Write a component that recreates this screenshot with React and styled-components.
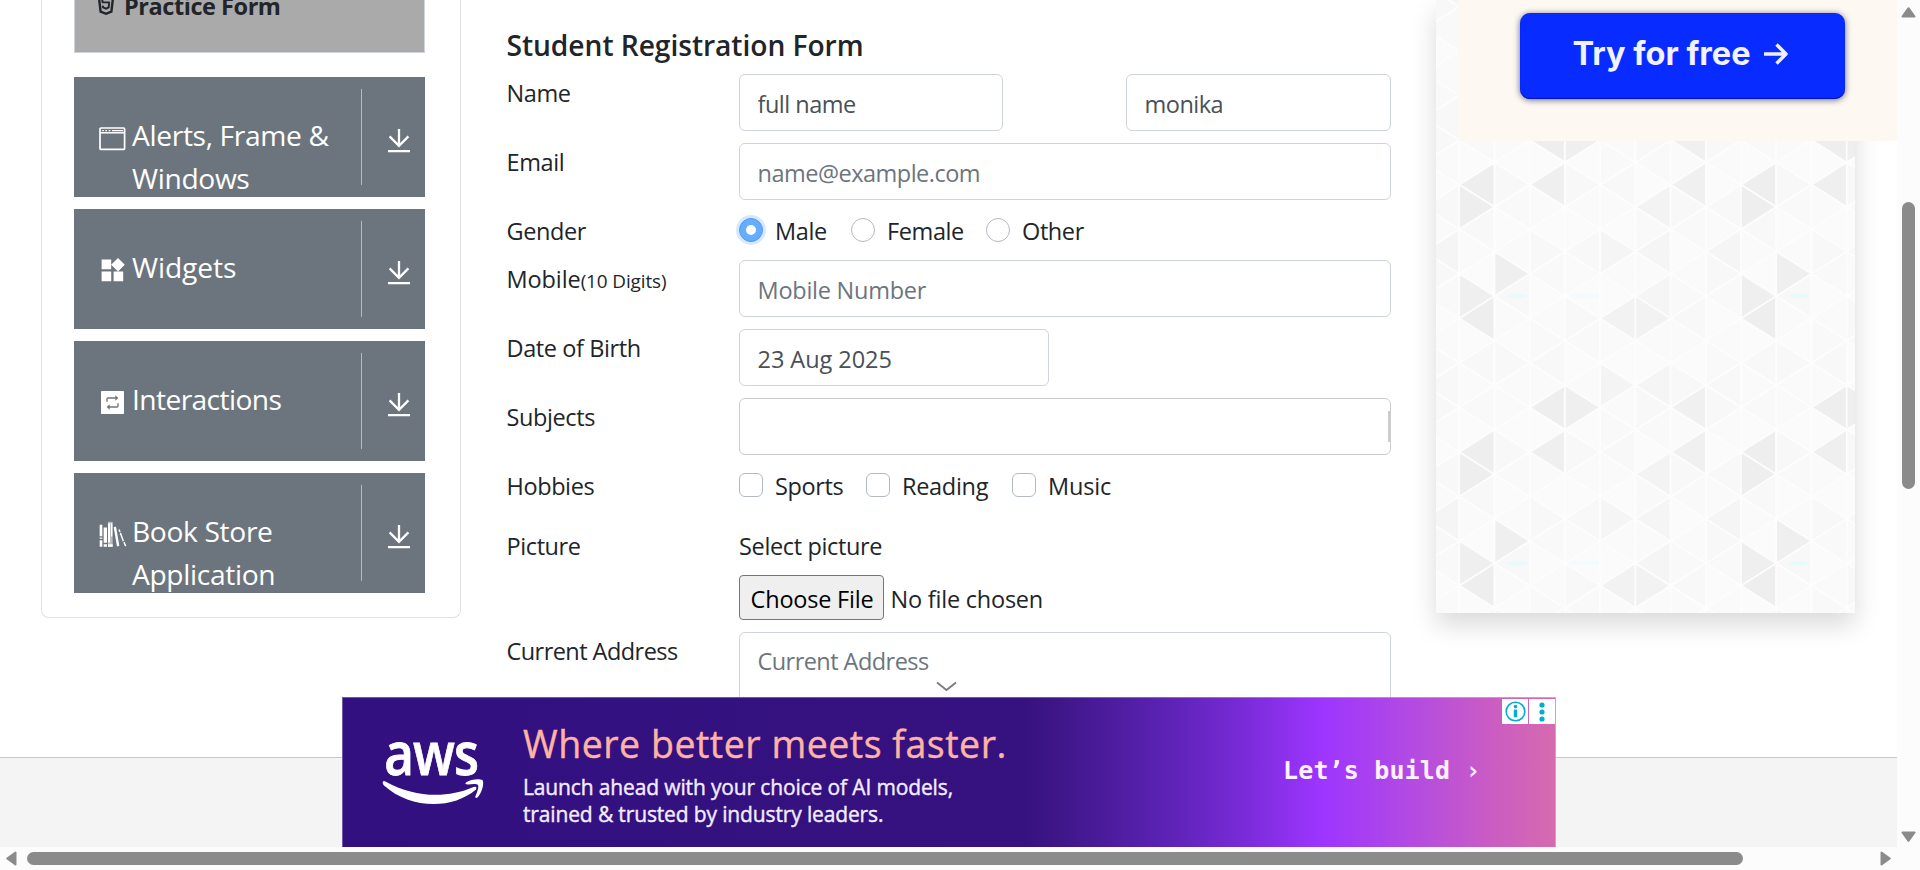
import React from 'react';
import styled, { createGlobalStyle, css } from 'styled-components';
import { MdWidgets } from 'react-icons/md';

const GlobalStyle = createGlobalStyle`
  *, *::before, *::after { box-sizing: border-box; }
  html, body { margin: 0; height: 870px; overflow: hidden; background: #fff; }
  body {
    font-family: "Open Sans", "Noto Sans", sans-serif;
    font-size: 23.5px;
    line-height: 36px;
    letter-spacing: -0.35px;
    color: #212529;
  }
`;

/* ---------- window frame ---------- */

const Window = styled.div`
  display: grid;
  grid-template: 847px 23px / 1897px 23px;
  width: 1920px;
  height: 870px;
  background: #fcfcfc;
`;

const Viewport = styled.div`
  position: relative;
  display: flex;
  flex-direction: column;
  overflow: hidden;
  background: #fff;
`;

const Scrollbar = styled.div`
  display: flex;
  flex-direction: ${(p) => (p.$vertical ? 'column' : 'row')};
  align-items: center;
  padding: ${(p) => (p.$vertical ? '7px 1px 5px 0' : '0 6px 1px 6px')};
`;

const Arrow = styled.svg`
  flex: none;
  fill: #8b8b8b;
  stroke: #8b8b8b;
  stroke-width: 2;
  stroke-linejoin: round;
`;

const Thumb = styled.div`
  flex: none;
  background: #8b8b8b;
  border-radius: 7px;
  ${(p) =>
    p.$vertical
      ? css`width: 13px; height: 287px; margin: 184px 0 auto;`
      : css`height: 13px; width: 1716px; margin: 0 auto 0 10px;`}
`;

/* ---------- main area ---------- */

const Main = styled.main`
  flex: none;
  display: flex;
  align-items: flex-start;
  height: 757px;
  overflow: hidden;
`;

const Footer = styled.footer`
  flex: 1;
  border-top: 1px solid #c8c8c8;
  background: #f4f4f4;
`;

const Sidebar = styled.nav`
  flex: none;
  display: flex;
  flex-direction: column;
  gap: 12px;
  width: 420px;
  height: 618px;
  margin-left: 41px;
  padding: 0 35px 24px 32px;
  border: 1px solid #dee0e2;
  border-top: 0;
  border-radius: 0 0 8px 8px;
`;

const ActiveEntry = styled.div`
  display: flex;
  height: 53px;
  margin-bottom: 12px;
  padding-left: 22px;
  background: #aaa;
  border: 1px solid #ced4da;
  border-top: 0;
  font-weight: 700;
  letter-spacing: -0.45px;
`;

const ActiveLabel = styled.span`
  margin: -12px 0 0 9px;
`;

const Group = styled.div`
  display: flex;
  flex: none;
  height: 120px;
  overflow: hidden;
  background: #6c757d;
  color: #fff;
`;

const GroupIcon = styled.div`
  display: flex;
  align-items: center;
  justify-content: center;
  flex: none;
  width: 29px;
  height: 29px;
  margin: 47px 5px 0 24px;
`;

const GroupTitle = styled.div`
  width: 229px;
  padding-top: 37px;
  font-size: 28.2px;
  line-height: 43.2px;
  letter-spacing: ${(p) => p.$track ?? -0.35}px;
`;

const GroupToggle = styled.div`
  display: flex;
  justify-content: center;
  align-items: center;
  width: 64px;
  height: 96px;
  margin-top: 12px;
  padding: 7px 0 0 11px;
  border-left: 1px solid #b5babe;
`;

const WindowIcon = () => (
  <svg width="27" height="24" viewBox="0 0 27 24" fill="none" stroke="#fff">
    <rect x="1" y="1" width="24.6" height="21.4" rx="1" strokeWidth="1.7" />
    <path d="M1 5.8h24.6" strokeWidth="1.5" />
    <path d="M3.2 3.6h1.6M6.4 3.6h1.6M9.6 3.6h1.8M13 3.6h11" strokeWidth="1.3" />
  </svg>
);

const RepeatIcon = () => (
  <svg width="23" height="23" viewBox="0 0 69 69">
    <rect width="69" height="69" rx="2" fill="#fff" />
    <g fill="none" stroke="#6c757d" strokeWidth="4">
      <path d="M18 32v-8q0-3 3-3h24M51 37v8q0 3-3 3H24" />
    </g>
    <path d="M43 13l9 8-9 8zM26 40l-9 8 9 8z" fill="#6c757d" />
  </svg>
);

const BooksIcon = () => (
  <svg width="28" height="27" viewBox="0 0 84 80" fill="#fff">
    <path d="M2 11h8v34H2zM2 49h8v4H2zM2 57h8v20H2z" />
    <path d="M14 19h10v46H14zM14 69h10v8H14z" />
    <path d="M27 2h14v75H27z" fill="#b9bec3" />
    <path d="M27 6h6v58h-6zM36 6h4v40h-4zM27 69h14v8H27z" />
    <path d="M44 18l7-2 10 58-7 2z" />
    <path d="M58 26l4-2 3 7-4 2zM62 36l4-2 9 25-4 2zM73 64l4-2 5 12-4 2z" />
  </svg>
);

const DownloadIcon = () => (
  <svg width="24" height="26" viewBox="0 0 24 26" fill="none" stroke="#fff" strokeWidth="2.3">
    <path d="M12 1v17M2.6 8.4L12 17.8l9.4-9.4M1 23.2h22" />
  </svg>
);

const Html5Icon = () => (
  <svg width="18" height="16" viewBox="0 0 18 16" fill="none" stroke="#212529">
    <path d="M1.7-5l1.9 16.6L9 13.8l5.4-2.2L16.3-5" strokeWidth="2.4" />
    <path d="M5 2.4h7.8M5.4-1v3.4M12.2 2.4l-.5 5L9 8.6 6 7.4l-.2-1.8" strokeWidth="1.9" />
  </svg>
);

/* ---------- form ---------- */

const Form = styled.form`
  flex: none;
  display: flex;
  flex-direction: column;
  width: 885px;
  margin: 28px 44.5px 0 45.5px;
`;

const Title = styled.h5`
  margin: 0 0 12px;
  font-size: 28.2px;
  line-height: 34px;
  font-weight: 600;
  letter-spacing: -0.06px;
`;

const Row = styled.div`
  display: grid;
  grid-template-columns: 232.5px 652px;
  align-items: start;
  margin-bottom: ${(p) => p.$gap ?? 12}px;
`;

const Label = styled.label`
  padding-top: 1px;
  height: 36px;
  letter-spacing: ${(p) => p.$track ?? -0.4}px;
  white-space: nowrap;

  small { font-size: 18.9px; letter-spacing: -0.1px; }
`;

const control = css`
  border: 1px solid #ced4da;
  border-radius: 6px;
  background: #fff;
  color: #495057;
  font-family: inherit;
  font-size: 23.5px;
  letter-spacing: ${(p) => p.$track ?? -0.5}px;
  outline: 0;
  &::placeholder { color: #6c757d; opacity: 1; }
`;

const Input = styled.input`
  ${control}
  width: ${(p) => p.$width || 652}px;
  height: 57px;
  padding: 3px 17.5px 0;
`;

const NamePair = styled.div`
  display: flex;
  justify-content: space-between;
`;

const TextArea = styled.textarea`
  ${control}
  width: 652px;
  height: 120px;
  padding: 10px 17.5px;
  line-height: 36px;
  resize: none;
`;

const TagBox = styled.div`
  display: flex;
  align-items: center;
  justify-content: flex-end;
  width: 652px;
  height: 57px;
  border: 1px solid #ccc;
  border-radius: 6px;
  padding-bottom: 1px;
`;

const TagBoxSeparator = styled.span`
  width: 2px;
  height: 31px;
  background: #ccc;
`;

const Options = styled.div`
  display: flex;
`;

const Option = styled.label`
  display: flex;
  width: ${(p) => p.$width}px;
  padding-top: 1px;
  gap: 12px;
  height: 36px;
  letter-spacing: ${(p) => p.$track ?? -0.4}px;
`;

const Mark = styled.span`
  flex: none;
  display: flex;
  align-items: center;
  justify-content: center;
  width: 24px;
  height: 24px;
  margin-top: 5px;
  border: 1px solid #b2bac2;
  border-radius: ${(p) => (p.$round ? '50%' : '6px')};
  ${(p) =>
    p.$checked &&
    css`
      background: #66adff;
      border-color: #4f9bf0;
      box-shadow: 0 0 0 3px #d8e9fd;
      &::after {
        content: '';
        width: 10px;
        height: 10px;
        border-radius: 50%;
        background: #fff;
      }
    `}
`;

const PictureField = styled.div`
  display: flex;
  flex-direction: column;
  gap: 12px;
`;

const FileRow = styled.div`
  display: flex;
  align-items: center;
  height: 45px;
  letter-spacing: -0.22px;
`;

const FileButton = styled.span`
  width: 145px;
  height: 45px;
  margin-right: 6.5px;
  padding: 5px 0 0 1px;
  border: 1px solid #767676;
  border-radius: 4px;
  background: #efefef;
  color: #000;
  text-align: center;
  white-space: nowrap;
`;

const FileStatus = styled.span`
  padding-top: 3px;
`;

/* ---------- right-hand promotion ---------- */

const PromoColumn = styled.aside`
  position: relative;
  flex: none;
  width: 419px;
  height: 613px;
  background: #fafafa;
  box-shadow: 0 12px 24px rgba(0, 0, 0, 0.15);
`;

const Pattern = styled.svg`
  position: absolute;
  inset: 0;
`;

const PromoCard = styled.div`
  position: relative;
  width: 439px;
  height: 141px;
  margin-left: 22px;
  padding: 13px 0 0 61.5px;
  background: #fdf8f1;
`;

const PromoButton = styled.div`
  display: flex;
  align-items: center;
  justify-content: center;
  gap: 12px;
  width: 325px;
  height: 86px;
  padding: 0 3px 4px 0;
  border-radius: 10px;
  background: #082cff;
  box-shadow: 0 1px 6px rgba(40, 40, 80, 0.7), inset 0 -1px 1px #0610c8;
  color: #f0f2ff;
  font: 700 32.5px/40px Inter, sans-serif;
  letter-spacing: 0;
`;

const COL = 35.22;
const HALF = 22.275;
const SHADES = {
  '0L2': '#eeeeee', '0R3': '#eeeeee', '2L2': '#efefef', '2L0': '#eeeeee', '3R0': '#efefef',
  '6L0': '#f0f0f0', '6L2': '#f0f0f0', '5L3': '#f3f3f3', '1R6': '#efefef', '0R7': '#efefef',
  '0L8': '#eeeeee', '4L8': '#f2f2f2', '5R8': '#f2f2f2', '5L7': '#f5f5f5', '5L5': '#f5f5f5',
  '7L5': '#f5f5f5', '4R5': '#f5f5f5', '4R11': '#f4f4f4', '5L11': '#f5f5f5',
};
const SOFT = ['#f8f8f8', '#fafafa', '#f9f9f9', '#fbfbfb', '#f8f8f8', '#fafafa', '#fbfbfb'];

const triangles = [];
for (let c = -1; c < 12; c++) {
  for (let h = -8; h < 24; h++) {
    const cm = (c + 8) % 8;
    const hm = (h + 12) % 12;
    const even = (c + h + 12) % 2 === 0;
    const x0 = 1459.3 + c * COL;
    const x1 = x0 + COL;
    const y = 140.2 + h * HALF;
    const key = `${cm}${even ? 'L' : 'R'}${hm}`;
    const fill = SHADES[key] || SOFT[(cm * 5 + hm * 3 + (even ? 2 : 0)) % 7];
    const pts = even
      ? `${x0},${y} ${x1},${y - HALF} ${x1},${y + HALF}`
      : `${x1},${y} ${x0},${y - HALF} ${x0},${y + HALF}`;
    triangles.push({ id: `${c}_${h}`, pts, fill });
  }
}

const tints = [
  [1517, 296, 11], [1584, 296, 16], [1799, 296, 11],
  [1517, 563.5, 11], [1584, 563, 16], [1799, 563.5, 11],
];

const TrianglePattern = () => (
  <Pattern width="419" height="613" viewBox="1436 0 419 613">
    {triangles.map((t) => (
      <polygon key={t.id} points={t.pts} fill={t.fill} stroke="#fdfdfd" strokeWidth="1.6" />
    ))}
    {tints.map(([x, y, r]) => (
      <ellipse key={`${x}_${y}`} cx={x} cy={y} rx={r} ry="2.2" fill={r > 12 ? '#f2fcfc' : '#e8fbfc'} />
    ))}
  </Pattern>
);

/* ---------- anchored banner ---------- */

const Banner = styled.div`
  position: absolute;
  left: 342px;
  bottom: 0;
  display: flex;
  width: 1214px;
  height: 150px;
  border: 1px solid rgba(255, 255, 255, 0.3);
  border-bottom: 0;
  background: linear-gradient(90deg, #32107f 0, #35127f 680px, #3c1584 705px, #5b22b4 822px,
    #7a2bd8 903px, #9d35ff 979px, #b34be2 1071px, #cb5cc3 1150px, #d66bae 1214px) border-box;
  color: #fff;
`;

const CollapseArrow = styled.svg`
  position: absolute;
  left: 936px;
  top: 681px;
  fill: none;
  stroke: #7c7c7c;
  stroke-width: 1.8;
`;

const Logo = styled.div`
  width: 180px;
  padding: 24px 0 0 39px;
`;

const LogoWord = styled.div`
  padding-left: 2px;
  width: 120px;
  height: 60px;
  font: 600 59px/60px "Open Sans", sans-serif;
  letter-spacing: -1px;
  transform: scaleX(0.87);
  transform-origin: 3px 0;
  -webkit-text-stroke: 0.8px #fff;
`;

const Smile = styled.svg`
  display: block;
  margin-top: -5px;
`;

const Copy = styled.div`
  width: 760px;
  padding-top: 20px;
`;

const Headline = styled.div`
  font-size: 37.5px;
  line-height: 52px;
  letter-spacing: 0.52px;
  color: #ffb3a4;
  -webkit-text-stroke: 0.4px #ffb3a4;
`;

const Blurb = styled.div`
  padding-top: 4px;
  font-size: 21px;
  line-height: 26.5px;
  font-weight: 500;
  letter-spacing: -0.14px;
  color: #f3ecff;
  -webkit-text-stroke: 0.4px #f3ecff;
`;

const Cta = styled.div`
  padding-top: 58px;
  font: 700 25px/30px "DejaVu Sans Mono", monospace;
  letter-spacing: 0.15px;
  color: #fdf0ff;
  white-space: nowrap;
`;

const AdChoices = styled.div`
  position: absolute;
  top: 1px;
  right: 0;
  display: flex;
  gap: 1px;
`;

const AdButton = styled.span`
  display: flex;
  align-items: center;
  justify-content: center;
  width: 26px;
  height: 25px;
  background: #fff;
`;

const groups = [
  { lines: ['Alerts, Frame &', 'Windows'], icon: <WindowIcon /> },
  { lines: ['Widgets'], icon: <MdWidgets size={28.8} />, track: -0.1 },
  { lines: ['Interactions'], icon: <RepeatIcon />, track: -0.6 },
  { lines: ['Book Store', 'Application'], icon: <BooksIcon /> },
];

export default function App() {
  return (
    <Window>
      <GlobalStyle />
      <Viewport>
        <Main>
          <Sidebar>
            <ActiveEntry>
              <Html5Icon />
              <ActiveLabel>Practice Form</ActiveLabel>
            </ActiveEntry>
            {groups.map((g) => (
              <Group key={g.lines[0]}>
                <GroupIcon>{g.icon}</GroupIcon>
                <GroupTitle $track={g.track}>
                  {g.lines.map((line) => (
                    <div key={line}>{line}</div>
                  ))}
                </GroupTitle>
                <GroupToggle>
                  <DownloadIcon />
                </GroupToggle>
              </Group>
            ))}
          </Sidebar>

          <Form>
            <Title>Student Registration Form</Title>
            <Row>
              <Label>Name</Label>
              <NamePair>
                <Input $width={264} defaultValue="full name" $track={-0.5} />
                <Input $width={265} defaultValue="monika" />
              </NamePair>
            </Row>
            <Row>
              <Label>Email</Label>
              <Input placeholder="name@example.com" />
            </Row>
            <Row>
              <Label>Gender</Label>
              <Options>
                <Option $width={112}><Mark $round $checked />Male</Option>
                <Option $width={135}><Mark $round />Female</Option>
                <Option $width={135}><Mark $round />Other</Option>
              </Options>
            </Row>
            <Row>
              <Label $track={-0.1}>Mobile<small>(10 Digits)</small></Label>
              <Input placeholder="Mobile Number" $track={-0.25} />
            </Row>
            <Row>
              <Label>Date of Birth</Label>
              <Input $width={310} defaultValue="23 Aug 2025" $track={-0.05} />
            </Row>
            <Row>
              <Label>Subjects</Label>
              <TagBox><TagBoxSeparator /></TagBox>
            </Row>
            <Row $gap={24}>
              <Label>Hobbies</Label>
              <Options>
                <Option $width={127}><Mark />Sports</Option>
                <Option $width={146} $track={-0.3}><Mark />Reading</Option>
                <Option $width={135} $track={-0.2}><Mark />Music</Option>
              </Options>
            </Row>
            <Row>
              <Label>Picture</Label>
              <PictureField>
                <Label $track={-0.35}>Select picture</Label>
                <FileRow>
                  <FileButton>Choose File</FileButton>
                  <FileStatus>No file chosen</FileStatus>
                </FileRow>
              </PictureField>
            </Row>
            <Row>
              <Label $track={-0.55}>Current Address</Label>
              <TextArea placeholder="Current Address" $track={-0.55} />
            </Row>
          </Form>

          <PromoColumn>
            <TrianglePattern />
            <PromoCard>
              <PromoButton>
                Try for free
                <svg width="26" height="24" viewBox="0 0 26 24" fill="none" stroke="#eef0ff" strokeWidth="3.4">
                  <path d="M1 12h22M13.5 2.5L23 12l-9.5 9.5" strokeLinejoin="round" />
                </svg>
              </PromoButton>
            </PromoCard>
          </PromoColumn>
        </Main>
        <Footer />

        <CollapseArrow width="21" height="11" viewBox="0 0 21 11">
          <path d="M1 1.5l9.5 7.5L20 1.5" />
        </CollapseArrow>
        <Banner>
          <Logo>
            <LogoWord>aws</LogoWord>
            <Smile width="104" height="28" viewBox="0 0 104 28" fill="#fff">
              <path d="M1 4.5Q0 6.5 2 8.5C28 32 70 33 94 12.500Q95.500 9 91.500 10C65 21.500 33 21 3.500 4.500Q1.600 3.500 1 4.500Z" />
              <path d="M84 5.500C89 2 97 1.500 100.500 3 102.500 6 100 16 95.500 20.500 93.500 21.500 93 20.500 93.500 19 95.500 14.500 97 10 96 8 94.500 6.500 90 7 86 7.500 83.500 7.500 82.800 6.500 84 5.500Z" />
            </Smile>
          </Logo>
          <Copy>
            <Headline>Where better meets faster.</Headline>
            <Blurb>
              Launch ahead with your choice of AI models,
              <br />
              trained &amp; trusted by industry leaders.
            </Blurb>
          </Copy>
          <Cta>Let’s build ›</Cta>
          <AdChoices>
            <AdButton>
              <svg width="21" height="21" viewBox="0 0 21 21" fill="#00aecd">
                <circle cx="10.500" cy="10.500" r="9.300" fill="none" stroke="#00aecd" strokeWidth="1.600" />
                <circle cx="10.500" cy="5.600" r="1.800" />
                <path d="M8.800 8.600h3.400v7.600H8.800z" />
              </svg>
            </AdButton>
            <AdButton>
              <svg width="6" height="20" viewBox="0 0 6 20" fill="#00aecd">
                <circle cx="3" cy="3" r="2.600" />
                <circle cx="3" cy="10" r="2.600" />
                <circle cx="3" cy="17" r="2.600" />
              </svg>
            </AdButton>
          </AdChoices>
        </Banner>
      </Viewport>

      <Scrollbar $vertical>
        <Arrow width="15" height="11" viewBox="0 0 15 11"><path d="M7.500 1.200L13.500 9.500H1.500Z" /></Arrow>
        <Thumb $vertical />
        <Arrow width="15" height="11" viewBox="0 0 15 11"><path d="M7.500 9.800L13.500 1.500H1.500Z" /></Arrow>
      </Scrollbar>
      <Scrollbar>
        <Arrow width="11" height="15" viewBox="0 0 11 15"><path d="M1.200 7.500L9.500 1.500V13.500Z" /></Arrow>
        <Thumb />
        <Arrow width="11" height="15" viewBox="0 0 11 15"><path d="M9.800 7.500L1.500 1.500V13.500Z" /></Arrow>
      </Scrollbar>
    </Window>
  );
}
